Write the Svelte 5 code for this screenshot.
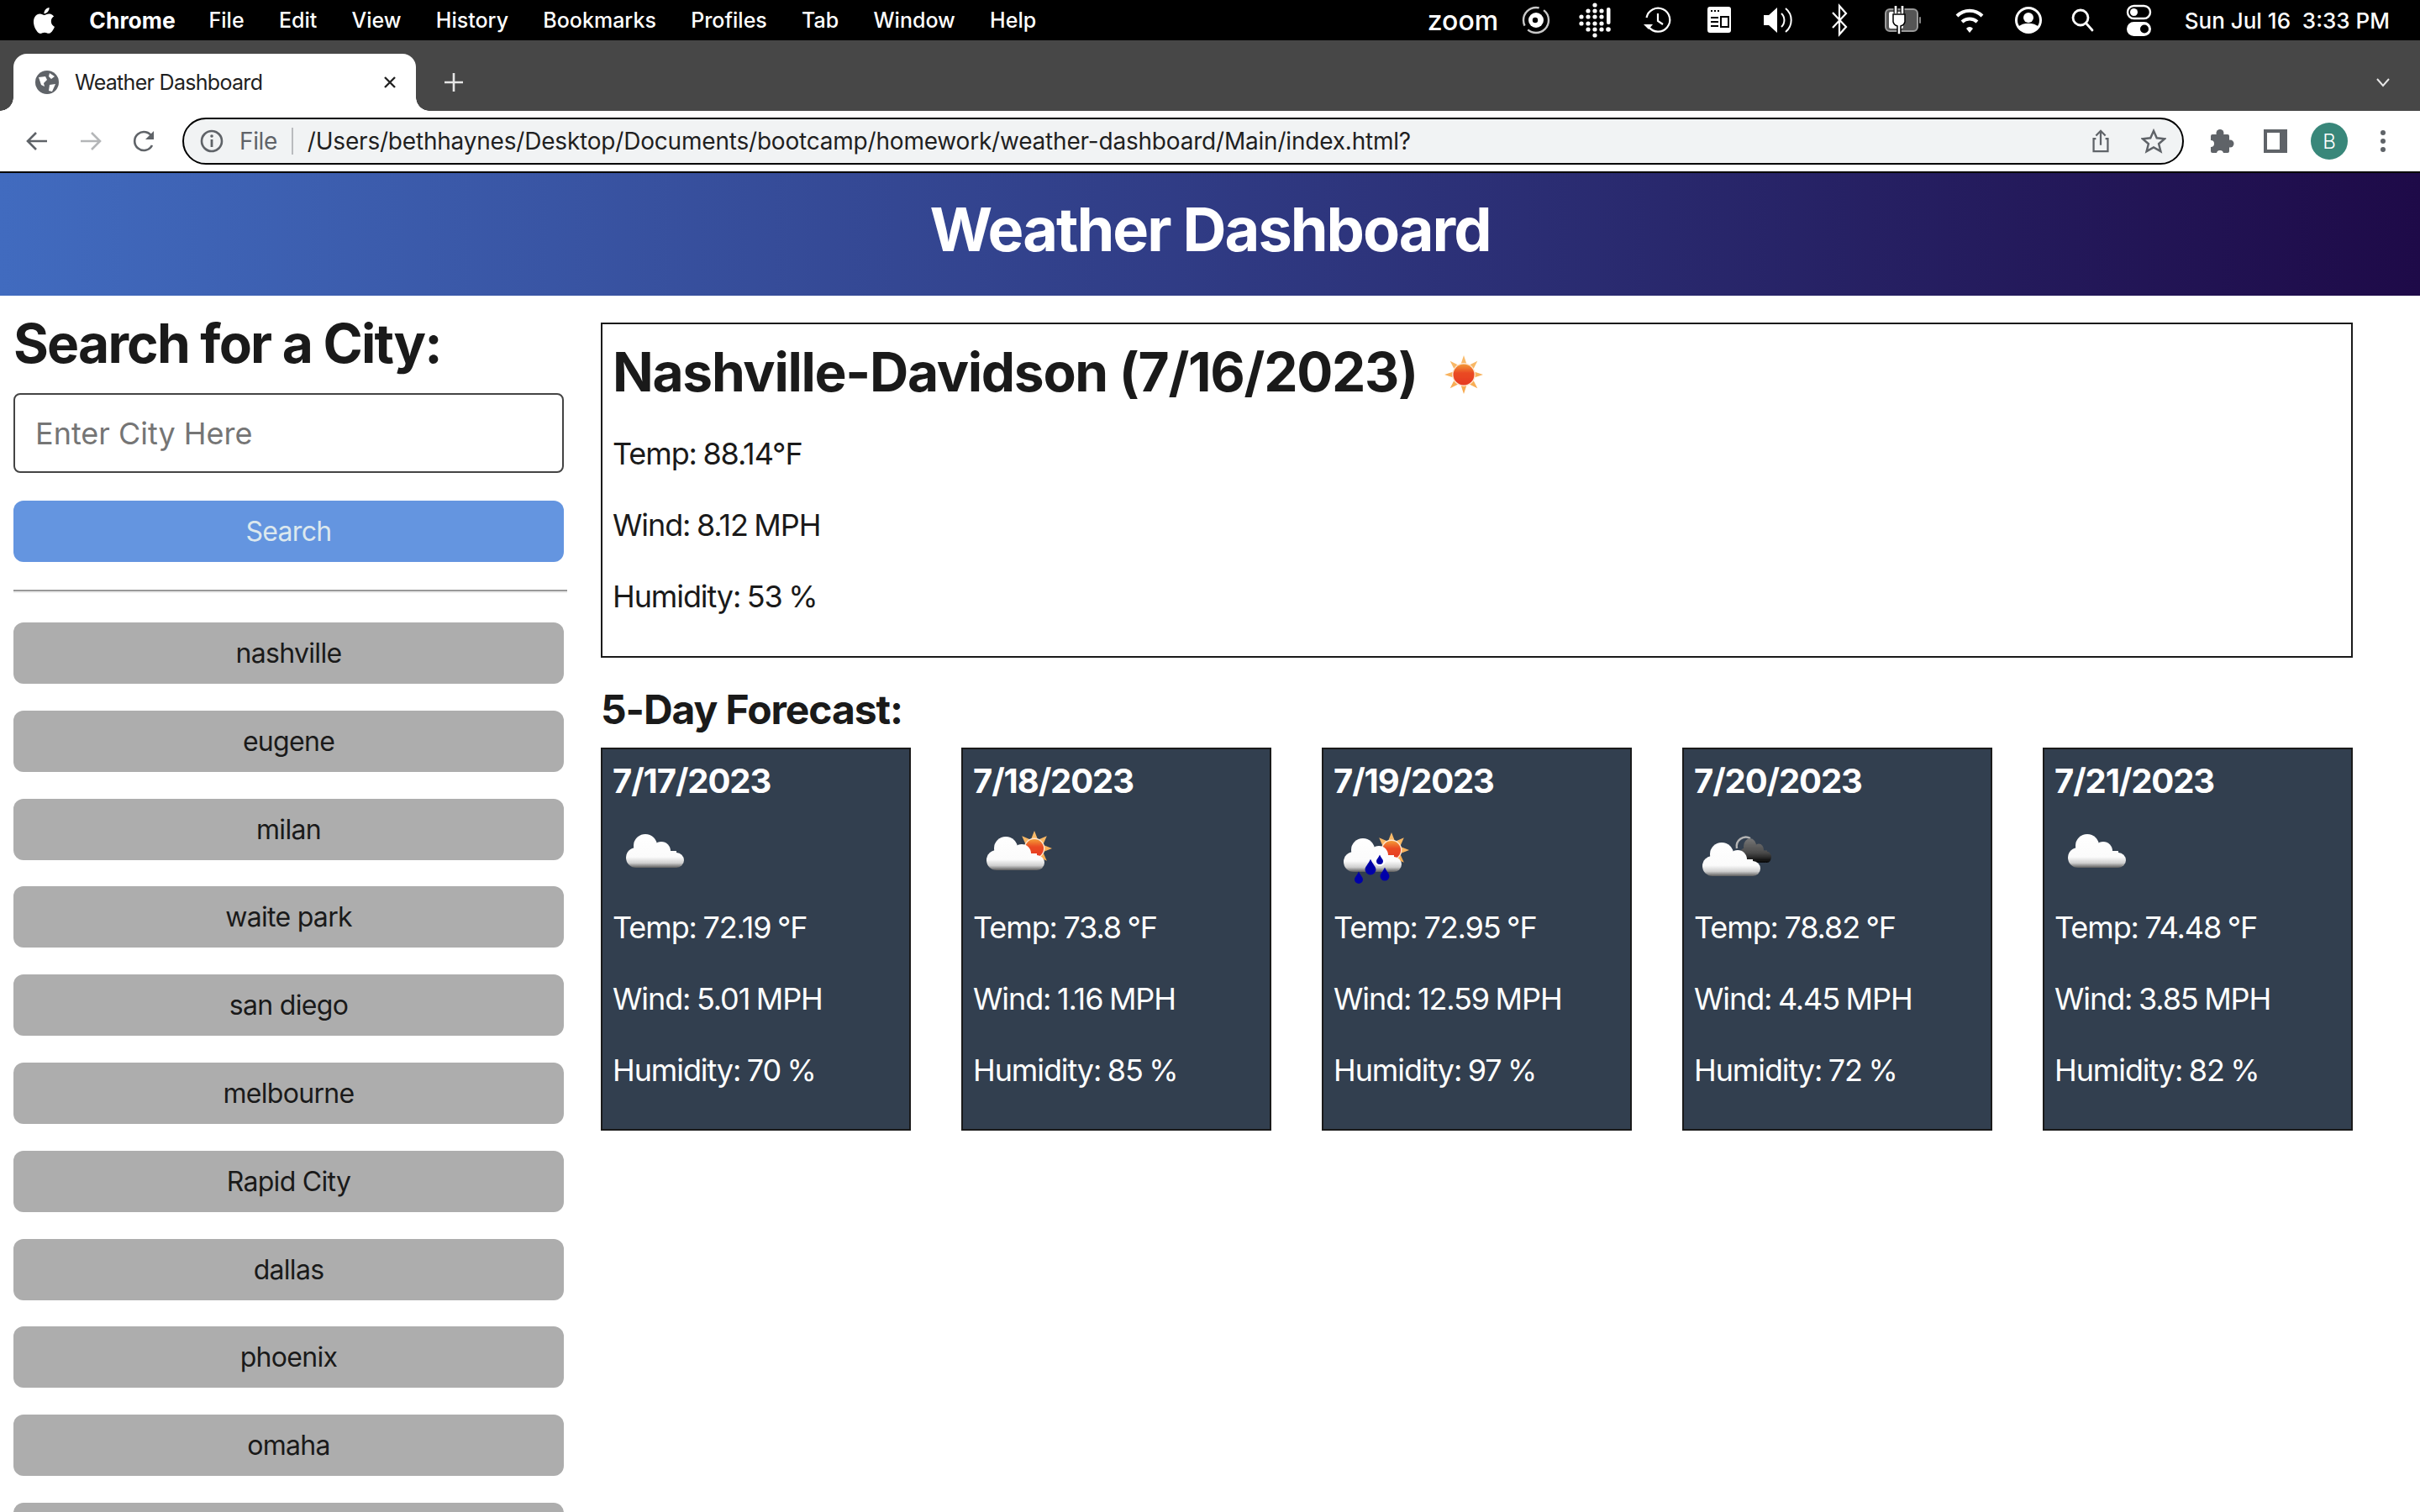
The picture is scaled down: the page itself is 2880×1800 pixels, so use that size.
<script>
	const menus = ['File', 'Edit', 'View', 'History', 'Bookmarks', 'Profiles', 'Tab', 'Window', 'Help'];
	const cities = ['nashville', 'eugene', 'milan', 'waite park', 'san diego', 'melbourne', 'Rapid City', 'dallas', 'phoenix', 'omaha', ''];
	const forecast = [
		{ date: '7/17/2023', kind: 'cloud', temp: '72.19', wind: '5.01', humidity: 70 },
		{ date: '7/18/2023', kind: 'few', temp: '73.8', wind: '1.16', humidity: 85 },
		{ date: '7/19/2023', kind: 'rain', temp: '72.95', wind: '12.59', humidity: 97 },
		{ date: '7/20/2023', kind: 'night', temp: '78.82', wind: '4.45', humidity: 72 },
		{ date: '7/21/2023', kind: 'cloud', temp: '74.48', wind: '3.85', humidity: 82 }
	];

	// star outline for the sun rays
	function star(cx, cy, inner, outer, n = 8) {
		const pts = [];
		for (let i = 0; i < n * 2; i++) {
			const r = i % 2 ? inner : outer;
			const a = (Math.PI * i) / n - Math.PI / 2;
			pts.push(`${(cx + r * Math.cos(a)).toFixed(1)},${(cy + r * Math.sin(a)).toFixed(1)}`);
		}
		return pts.join(' ');
	}

	const fitbit = [
		[-17, -4], [-17, 4],
		[-9, -11], [-9, -4], [-9, 4], [-9, 11],
		[-1, -18], [-1, -11], [-1, -4], [-1, 4], [-1, 11], [-1, 18],
		[7, -11], [7, -4], [7, 4], [7, 11]
	];
</script>

{#snippet sun(cx, cy, inner, outer, disc)}
	<polygon points={star(cx, cy, inner, outer)} fill="url(#rays)" />
	<circle {cx} {cy} r={disc + 1.4} fill="#ffe6cf" />
	<circle {cx} {cy} r={disc} fill="url(#disc)" />
{/snippet}

{#snippet cloud(x, y, fill = 'url(#cloudWhite)')}
	<g transform="translate({x} {y})" {fill}>
		<circle cx="23" cy="14" r="14" />
		<circle cx="42" cy="20" r="11" />
		<circle cx="12" cy="28" r="12" />
		<circle cx="60" cy="31" r="9" />
		<rect x="12" y="20" width="48" height="20" />
	</g>
{/snippet}

{#snippet drop(x, y, r)}
	<path d="M{x} {y - r * 1.9} C{x + r * 0.4} {y - r} {x + r} {y - r * 0.5} {x + r} {y} A{r} {r} 0 0 1 {x - r} {y} C{x - r} {y - r * 0.5} {x - r * 0.4} {y - r} {x} {y - r * 1.9}Z" fill="#0505a8" />
{/snippet}

{#snippet weather(kind)}
	<svg class="wicon" viewBox="0 0 100 100" aria-hidden="true">
		<g filter="url(#soft)">
			{#if kind === 'cloud'}
				{@render cloud(15, 33)}
			{:else if kind === 'few'}
				{@render sun(72, 50, 11, 21, 11)}
				{@render cloud(15, 36)}
			{:else if kind === 'rain'}
				{@render sun(68, 52, 11, 21, 11)}
				{@render cloud(11, 38)}
				<circle cx="54" cy="64" r="7" fill="#fff" />
				{@render drop(43, 75, 6.5)}
				{@render drop(29, 87, 5)}
				{@render drop(60, 83, 5.5)}
				{@render drop(54, 65, 4)}
			{:else}
				<path d="M50 50 A11 11 0 0 1 66 38" fill="none" stroke="#b5b5b5" stroke-width="2.5" />
				<g transform="translate(53 38) scale(.55 .72)">
					{@render cloud(0, 0, 'url(#cloudDark)')}
				</g>
				{@render cloud(9, 43)}
			{/if}
		</g>
	</svg>
{/snippet}

<svg class="defs" width="0" height="0" aria-hidden="true">
	<defs>
		<linearGradient id="cloudWhite" gradientUnits="userSpaceOnUse" x1="0" y1="0" x2="0" y2="40">
			<stop offset="0" stop-color="#fff" />
			<stop offset=".68" stop-color="#fbfbfb" />
			<stop offset=".86" stop-color="#cfcfcf" />
			<stop offset="1" stop-color="#5d5d5d" />
		</linearGradient>
		<linearGradient id="cloudDark" gradientUnits="userSpaceOnUse" x1="0" y1="0" x2="0" y2="40">
			<stop offset="0" stop-color="#777" />
			<stop offset=".6" stop-color="#4a4a4a" />
			<stop offset="1" stop-color="#050505" />
		</linearGradient>
		<linearGradient id="rays" x1="0" y1="0" x2="0" y2="1">
			<stop offset="0" stop-color="#f9bc6c" />
			<stop offset="1" stop-color="#f7a94e" />
		</linearGradient>
		<linearGradient id="disc" x1="0" y1="0" x2="0" y2="1">
			<stop offset="0" stop-color="#f39a35" />
			<stop offset=".42" stop-color="#ea4a24" />
			<stop offset="1" stop-color="#e63a22" />
		</linearGradient>
		<filter id="soft" x="-10%" y="-10%" width="120%" height="120%">
			<feGaussianBlur stdDeviation=".7" />
		</filter>
	</defs>
</svg>

<div class="screen">
	<div class="menubar">
		<svg class="apple" viewBox="0 0 24 24" fill="#fff" aria-hidden="true">
			<path d="M18.71 19.5c-.83 1.24-1.71 2.45-3.05 2.47-1.34.03-1.77-.79-3.29-.79-1.53 0-2 .77-3.27.82-1.31.05-2.3-1.32-3.14-2.53C4.25 17 2.94 12.45 4.7 9.39c.87-1.52 2.43-2.48 4.12-2.51 1.28-.02 2.5.87 3.29.87.78 0 2.26-1.07 3.81-.91.65.03 2.47.26 3.64 1.98-.09.06-2.17 1.28-2.15 3.81.03 3.02 2.65 4.03 2.68 4.04-.03.07-.42 1.44-1.38 2.83M13 3.5c.73-.83 1.94-1.46 2.94-1.5.13 1.17-.34 2.35-1.04 3.19-.69.85-1.83 1.51-2.95 1.42-.15-1.15.41-2.35 1.05-3.11z" />
		</svg>
		<strong class="app-name">Chrome</strong>
		{#each menus as menu}
			<span class="menu-item">{menu}</span>
		{/each}
		<span class="zoom-logo">zoom</span>
		<svg class="status" viewBox="0 0 792 48" width="792" height="48" aria-hidden="true">
			<g transform="translate(36 24)">
				<circle r="15" fill="none" stroke="#c8c8c8" stroke-width="2.4" stroke-dasharray="34 6" />
				<circle r="9" fill="#fff" />
				<circle cx="-1" r="3.2" fill="#000" />
			</g>
			<g transform="translate(107 24)" fill="#fff">
				{#each fitbit as [x, y]}
					<circle cx={x} cy={y} r="2.6" />
				{/each}
				<rect x="13" y="-15" width="4.5" height="20" rx="2" />
				<circle cx="15" cy="11" r="2.8" />
			</g>
			<g transform="translate(181 24)" fill="none" stroke="#fff" stroke-width="2.2">
				<path d="M-11 8 A14 14 0 1 0 -13.5 -3" />
				<path d="M-17 5 L-11 11 L-6 5" fill="#fff" stroke="none" />
				<path d="M0 -8 V1 L6 5" />
			</g>
			<g transform="translate(254 24)">
				<rect x="-14" y="-16" width="28" height="31" rx="3" fill="#fff" />
				<path d="M-10 -11h2M-6 -11h2M-2 -11h2" stroke="#000" stroke-width="2" />
				<path d="M-10 -3h9M-10 2h9M-10 7h9" stroke="#000" stroke-width="2" />
				<rect x="2" y="-4" width="9" height="12" fill="none" stroke="#000" stroke-width="2" />
			</g>
			<g transform="translate(326 24)">
				<path d="M-19 -6 H-13 L-3 -15 V15 L-13 6 H-19Z" fill="#fff" />
				<path d="M2 -8 A11 11 0 0 1 2 8" fill="none" stroke="#fff" stroke-width="2" />
				<path d="M7 -14 A18 18 0 0 1 7 14" fill="none" stroke="#fff" stroke-width="2" />
			</g>
			<path transform="translate(397 24)" d="M-8 -9 L8 8 L0 17 V-17 L8 -8 L-8 9" fill="none" stroke="#fff" stroke-width="2.2" />
			<g transform="translate(472 24)">
				<rect x="-20" y="-13" width="38" height="26" rx="5" fill="#555" stroke="#9a9a9a" stroke-width="2" />
				<rect x="-16" y="-10" width="17" height="20" rx="2" fill="#fff" />
				<rect x="20" y="-4" width="2" height="8" rx="1" fill="#888" />
				<path d="M-8 -17 V-8 M0 -17 V-8" stroke="#000" stroke-width="5" />
				<path d="M-8 -17 V-8 M0 -17 V-8" stroke="#fff" stroke-width="2.6" />
				<path d="M-11 -7 H3 V2 A7 7 0 0 1 -2 7 V17 H-6 V7 A7 7 0 0 1 -11 2Z" fill="#fff" stroke="#000" stroke-width="1.5" />
			</g>
			<g transform="translate(552 24)" fill="none" stroke="#fff" stroke-width="4">
				<path d="M-15 -5 A21 21 0 0 1 15 -5" />
				<path d="M-9 2 A13 13 0 0 1 9 2" />
				<path d="M-4 10 L0 15 L4 10 A5 5 0 0 0 -4 10Z" fill="#fff" stroke="none" />
			</g>
			<g transform="translate(622 24)">
				<circle r="16" fill="#fff" />
				<circle r="13" fill="#000" />
				<circle cy="-3" r="6" fill="#fff" />
				<path d="M-12 8 A14 9 0 0 1 12 8 A14 14 0 0 1 -12 8Z" fill="#fff" />
			</g>
			<g transform="translate(687 24)" fill="none" stroke="#fff" stroke-width="2.8">
				<circle cx="-3" cy="-3" r="9" />
				<path d="M3.5 3.5 L11 12" stroke-linecap="round" />
			</g>
			<g transform="translate(754 24)">
				<rect x="-14" y="-17" width="27" height="15" rx="7.5" fill="none" stroke="#fff" stroke-width="2.4" />
				<circle cx="-6.5" cy="-9.5" r="4.5" fill="#fff" />
				<rect x="-15" y="2" width="29" height="17" rx="8.5" fill="#fff" />
				<circle cx="6" cy="10.5" r="5" fill="#000" />
			</g>
		</svg>
		<span class="clock">Sun Jul 16&nbsp;&nbsp;3:33 PM</span>
	</div>

	<div class="tabstrip">
		<div class="tab">
			<svg class="favicon" viewBox="0 0 28 28" aria-hidden="true">
				<circle cx="14" cy="14" r="14" fill="#5f6368" />
				<path d="M4 8 L12 7 L14 11 L10 15 L11 19 L7 17Z M17 3 L23 7 L19 10 L16 7Z M17 17 L24 16 L20 25 L16 24Z" fill="#fff" />
			</svg>
			<span class="tab-title">Weather Dashboard</span>
			<svg class="tab-close" viewBox="0 0 16 16" aria-hidden="true">
				<path d="M2 2 L14 14 M14 2 L2 14" stroke="#222" stroke-width="2.4" />
			</svg>
		</div>
		<svg class="new-tab" viewBox="0 0 24 24" aria-hidden="true">
			<path d="M12 1 V23 M1 12 H23" stroke="#e6e6e6" stroke-width="2.6" />
		</svg>
		<svg class="tab-list" viewBox="0 0 16 16" aria-hidden="true">
			<path d="M1 4 L8 12 L15 4" fill="none" stroke="#e6e6e6" stroke-width="2" />
		</svg>
	</div>

	<div class="toolbar">
		<button class="tool" aria-label="Back">
			<svg viewBox="0 0 32 32"><path d="M28 16 H5 M15 6 L5 16 L15 26" fill="none" stroke="#5f6368" stroke-width="2.6" /></svg>
		</button>
		<button class="tool" aria-label="Forward">
			<svg viewBox="0 0 32 32"><path d="M4 16 H27 M17 6 L27 16 L17 26" fill="none" stroke="#b4b6b8" stroke-width="2.6" /></svg>
		</button>
		<button class="tool" aria-label="Reload">
			<svg viewBox="0 0 32 32"><path d="M25 21 A11 11 0 1 1 25 11" fill="none" stroke="#5f6368" stroke-width="2.6" /><path d="M27 4 V14 H17Z" fill="#5f6368" /></svg>
		</button>
		<div class="omnibox">
			<svg class="info" viewBox="0 0 28 28" aria-hidden="true">
				<circle cx="14" cy="14" r="12" fill="none" stroke="#5f6368" stroke-width="2.6" />
				<path d="M14 12 V21" stroke="#5f6368" stroke-width="2.8" />
				<circle cx="14" cy="8" r="1.8" fill="#5f6368" />
			</svg>
			<span class="scheme">File</span>
			<span class="divider"></span>
			<span class="url">/Users/bethhaynes/Desktop/Documents/bootcamp/homework/weather-dashboard/Main/index.html?</span>
			<svg class="omni-icon" viewBox="0 0 32 32" aria-hidden="true">
				<path d="M10 13 H7 V29 H25 V13 H22 M16 21 V3 M10 9 L16 3 L22 9" fill="none" stroke="#5f6368" stroke-width="2.4" />
			</svg>
			<svg class="omni-icon star" viewBox="0 0 32 32" aria-hidden="true">
				<path d="M16 3 L20 12 L30 13 L22.500 19.500 L25 29 L16 24 L7 29 L9.500 19.500 L2 13 L12 12Z" fill="none" stroke="#5f6368" stroke-width="2.6" />
			</svg>
		</div>
		<button class="tool" aria-label="Extensions">
			<svg viewBox="0 0 32 32" fill="#5f6368">
				<rect x="3" y="8" width="22" height="22" rx="2" />
				<circle cx="14" cy="6.500" r="4.500" />
				<circle cx="26" cy="19" r="4.500" />
				<circle cx="3" cy="19" r="4" fill="#fff" />
				<circle cx="14" cy="31" r="4" fill="#fff" />
			</svg>
		</button>
		<button class="tool" aria-label="Side panel">
			<svg viewBox="0 0 32 32"><rect x="2" y="2" width="28" height="28" fill="#5f6368" /><rect x="6" y="6" width="15" height="20" fill="#fff" /></svg>
		</button>
		<div class="tool">
			<span class="avatar">B</span>
		</div>
		<button class="tool" aria-label="Menu">
			<svg viewBox="0 0 32 32" fill="#5f6368"><circle cx="16" cy="6" r="3" /><circle cx="16" cy="16" r="3" /><circle cx="16" cy="26" r="3" /></svg>
		</button>
	</div>

	<header class="page-header">
		<h1>Weather Dashboard</h1>
	</header>

	<div class="layout">
		<aside class="sidebar">
			<h2>Search for a City:</h2>
			<input class="city-input" type="text" placeholder="Enter City Here" />
			<button class="btn search-btn">Search</button>
			<div class="rule"></div>
			{#each cities as city}
				<button class="btn city-btn">{city}</button>
			{/each}
		</aside>

		<main class="content">
			<section class="current">
				<h2>
					Nashville-Davidson (7/16/2023)
					<svg class="sun-icon" viewBox="0 0 50 50" aria-hidden="true">
						<g filter="url(#soft)">{@render sun(25, 25, 11, 23, 12.500)}</g>
					</svg>
				</h2>
				<p>Temp: 88.14°F</p>
				<p>Wind: 8.12 MPH</p>
				<p>Humidity: 53 %</p>
			</section>

			<h3>5-Day Forecast:</h3>
			<div class="cards">
				{#each forecast as day}
					<article class="card">
						<h4>{day.date}</h4>
						{@render weather(day.kind)}
						<p>Temp: {day.temp} °F</p>
						<p>Wind: {day.wind} MPH</p>
						<p>Humidity: {day.humidity} %</p>
					</article>
				{/each}
			</div>
		</main>
	</div>
</div>

<style>
	:global(body) {
		margin: 0;
		background: #fff;
	}

	.defs {
		position: absolute;
	}

	.screen {
		width: 2880px;
		height: 1800px;
		overflow: hidden;
		font-family: Inter, "Liberation Sans", sans-serif;
		color: #1a1a1a;
	}

	/* macOS menu bar */
	.menubar {
		height: 48px;
		background: #000;
		color: #fff;
		display: flex;
		align-items: center;
		gap: 41.3px;
		padding-left: 34px;
		font-size: 25px;
		font-weight: 500;
	}

	.apple {
		width: 37px;
		height: 37px;
		margin-right: -6px;
	}

	.app-name {
		font-size: 26.5px;
		font-weight: 700;
		margin-right: -1.5px;
	}

	.zoom-logo {
		margin-left: auto;
		font-size: 32px;
		margin-right: -32px;
	}

	.status {
		margin-right: -26px;
	}

	.clock {
		font-size: 26px;
		margin-right: 36px;
	}

	/* browser chrome */
	.tabstrip {
		height: 84px;
		background: #474747;
		display: flex;
		align-items: flex-end;
		padding-left: 16px;
		box-sizing: border-box;
	}

	.tab {
		position: relative;
		width: 479px;
		height: 68px;
		background: #fff;
		border-radius: 16px 16px 0 0;
		display: flex;
		align-items: center;
		box-sizing: border-box;
		padding: 0 23px 0 26px;
	}

	.tab::before,
	.tab::after {
		content: '';
		position: absolute;
		bottom: 0;
		width: 16px;
		height: 16px;
	}

	.tab::before {
		left: -16px;
		background: radial-gradient(circle at 0 0, transparent 15.5px, #fff 16px);
	}

	.tab::after {
		right: -16px;
		background: radial-gradient(circle at 100% 0, transparent 15.5px, #fff 16px);
	}

	.favicon {
		width: 28px;
		height: 28px;
		margin-right: 19px;
	}

	.tab-title {
		font-size: 25px;
		letter-spacing: -0.7px;
		color: #1f1f1f;
		flex: 1;
	}

	.tab-close {
		width: 16px;
		height: 16px;
	}

	.new-tab {
		width: 24px;
		height: 24px;
		margin: 0 0 22px 33px;
	}

	.tab-list {
		width: 16px;
		height: 16px;
		margin: 0 36px 26px auto;
	}

	.toolbar {
		height: 74px;
		box-sizing: border-box;
		background: #fff;
		border-bottom: 2px solid #000;
		display: flex;
		align-items: center;
		padding: 0 12px;
	}

	.tool {
		width: 64px;
		height: 56px;
		padding: 0;
		border: 0;
		background: none;
		display: flex;
		align-items: center;
		justify-content: center;
	}

	.tool svg {
		width: 32px;
		height: 32px;
	}

	.omnibox {
		flex: 1;
		height: 56px;
		box-sizing: border-box;
		margin: 0 13px;
		padding: 0 16px 0 19px;
		border: 2px solid #000;
		border-radius: 28px;
		background: #f1f3f4;
		display: flex;
		align-items: center;
	}

	.info {
		width: 28px;
		height: 28px;
		margin-right: 19px;
	}

	.scheme {
		font-size: 28px;
		letter-spacing: -0.4px;
		color: #5f6368;
	}

	.divider {
		width: 2px;
		height: 32px;
		background: #b9bbbe;
		margin: 0 17px;
	}

	.url {
		flex: 1;
		font-size: 28px;
		letter-spacing: -0.2px;
		color: #1f1f1f;
	}

	.omni-icon {
		width: 30px;
		height: 30px;
		margin-right: 33px;
	}

	.omni-icon.star {
		margin-right: 3px;
	}

	.avatar {
		width: 44px;
		height: 44px;
		border-radius: 50%;
		background: #39877a;
		color: #fff;
		font-size: 24px;
		font-weight: 300;
		display: flex;
		align-items: center;
		justify-content: center;
	}

	/* page */
	.page-header {
		height: 146px;
		box-sizing: border-box;
		padding-bottom: 12px;
		display: flex;
		align-items: center;
		justify-content: center;
		background: linear-gradient(to right, #416bbf, #1e0a48);
	}

	h1 {
		margin: 0;
		font-size: 72px;
		font-weight: 700;
		line-height: 1.2;
		letter-spacing: -2px;
		color: #fff;
	}

	.layout {
		display: flex;
		align-items: flex-start;
	}

	.sidebar {
		width: 659px;
		margin-left: 16px;
		padding-top: 18px;
		flex: none;
	}

	.sidebar h2 {
		margin: 0 0 21px;
		font-size: 64px;
		line-height: 77px;
		font-weight: 700;
		letter-spacing: -1.8px;
	}

	.city-input {
		display: block;
		width: 655px;
		height: 95px;
		box-sizing: border-box;
		padding: 0 24px;
		border: 2px solid #444;
		border-radius: 8px;
		font: 400 36px Inter, sans-serif;
		color: #1a1a1a;
		outline: none;
	}

	.city-input::placeholder {
		color: #757575;
	}

	.btn {
		display: block;
		width: 655px;
		height: 73px;
		padding: 0;
		border: 0;
		border-radius: 12px;
		font: 400 32px Inter, sans-serif;
		letter-spacing: -0.7px;
		text-align: center;
	}

	.search-btn {
		margin-top: 33px;
		background: #6495e0;
		color: #dce8ee;
	}

	.rule {
		height: 2px;
		margin: 33px 0 35px;
		background: #999;
		border-bottom: 2px solid #eee;
	}

	.city-btn {
		background: #adadad;
		color: #1a1a1a;
		margin-bottom: 31.8px;
	}

	.content {
		width: 2085px;
		margin-left: 40px;
		padding-top: 32px;
	}

	.current {
		border: 2px solid #1a1a1a;
		padding: 18px 12px 13px;
	}

	.current h2 {
		margin: 0 0 32px;
		display: flex;
		align-items: center;
		font-size: 64px;
		line-height: 77px;
		font-weight: 700;
		letter-spacing: -1.3px;
	}

	.sun-icon {
		width: 50px;
		height: 50px;
		margin: 6px 0 0 30px;
	}

	p {
		margin: 0 0 31px;
		font-size: 36px;
		line-height: 54px;
		letter-spacing: -1.1px;
		word-spacing: -1.5px;
	}

	h3 {
		margin: 33px 0 16px;
		font-size: 48px;
		line-height: 58px;
		font-weight: 700;
		letter-spacing: -1.1px;
	}

	.cards {
		display: flex;
		justify-content: space-between;
	}

	.card {
		width: 369px;
		height: 456px;
		box-sizing: border-box;
		border: 2px solid #1a1a1a;
		padding: 11px 12px;
		background: #323f4f;
		color: #fff;
	}

	h4 {
		margin: 0;
		font-size: 40px;
		line-height: 53px;
		font-weight: 700;
		letter-spacing: -1.1px;
	}

	.wicon {
		display: block;
		width: 100px;
		height: 100px;
		margin: 4px 0 17px 1px;
	}
</style>
